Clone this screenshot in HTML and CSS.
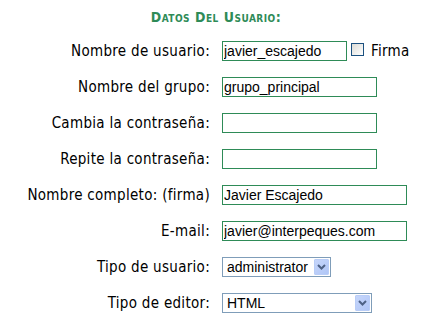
FILE: index.html
```html
<!DOCTYPE html>
<html lang="es">
<head>
    <meta charset="UTF-8">
    <title>Datos del usuario</title>
    <link rel="stylesheet" href="styles.css">
</head>
<body>
    <div id="main">
        <h2 class="title">Datos Del Usuario:</h2>
        <div class="form_grid">
            <label for="user">Nombre de usuario:</label>
            <div class="field_row">
                <input type="text" id="user" class="txt short" value="javier_escajedo">
                <span class="check"></span>
                <span class="check_label">Firma</span>
            </div>

            <label for="group">Nombre del grupo:</label>
            <div class="field_row">
                <input type="text" id="group" class="txt mid" value="grupo_principal">
            </div>

            <label for="pass1">Cambia la contraseña:</label>
            <div class="field_row">
                <input type="password" id="pass1" class="txt mid">
            </div>

            <label for="pass2">Repite la contraseña:</label>
            <div class="field_row">
                <input type="password" id="pass2" class="txt mid">
            </div>

            <label for="fullname">Nombre completo: (firma)</label>
            <div class="field_row">
                <input type="text" id="fullname" class="txt long" value="Javier Escajedo">
            </div>

            <label for="email">E-mail:</label>
            <div class="field_row">
                <input type="text" id="email" class="txt long" value="javier@interpeques.com">
            </div>

            <label for="utype">Tipo de usuario:</label>
            <div class="field_row">
                <div class="select_box sel_user">
                    <select id="utype">
                        <option>administrator</option>
                    </select>
                    <span class="drop_btn">
                        <svg width="9" height="6" viewBox="0 0 9 6"><path d="M1 1 L4.5 4.5 L8 1" fill="none" stroke="#4d6185" stroke-width="2"/></svg>
                    </span>
                </div>
            </div>

            <label for="etype">Tipo de editor:</label>
            <div class="field_row">
                <div class="select_box sel_editor">
                    <select id="etype">
                        <option>HTML</option>
                    </select>
                    <span class="drop_btn">
                        <svg width="9" height="6" viewBox="0 0 9 6"><path d="M1 1 L4.5 4.5 L8 1" fill="none" stroke="#4d6185" stroke-width="2"/></svg>
                    </span>
                </div>
            </div>
        </div>
    </div>
</body>
</html>
```

FILE: styles.css
```css
* {
    margin: 0;
    padding: 0;
    box-sizing: border-box;
}

body {
    background: #ffffff;
    font-family: "DejaVu Sans Condensed", "DejaVu Sans", sans-serif;
    font-size: 15px;
    letter-spacing: 0.3px;
    color: #000000;
}

#main {
    width: 425px;
    padding-top: 8px;
}

.title {
    text-align: center;
    padding-left: 7px;
    font-size: 14px;
    font-weight: bold;
    font-variant: small-caps;
    letter-spacing: 0.5px;
    color: #2e8b57;
    line-height: 18px;
    height: 18px;
}

.form_grid {
    display: grid;
    grid-template-columns: 210px auto;
    column-gap: 12px;
    row-gap: 16px;
    margin-top: 15px;
}

.form_grid > label {
    text-align: right;
    line-height: 20px;
    height: 20px;
    white-space: nowrap;
}

.field_row {
    display: flex;
    align-items: center;
    height: 20px;
}

.txt {
    height: 20px;
    border: 1px solid #2e8b57;
    padding: 0 1px;
    font-family: "Liberation Sans", Arial, sans-serif;
    font-size: 14px;
    letter-spacing: 0;
    color: #000000;
    outline: none;
}

.short {
    width: 125px;
}

.mid {
    width: 155px;
}

.long {
    width: 185px;
}

.check {
    width: 13px;
    height: 13px;
    margin-left: 4px;
    margin-bottom: 3px;
    border: 1px solid #1c5180;
    background: linear-gradient(135deg, #dcdcd7, #ffffff);
}

.check_label {
    margin-left: 7px;
}

.select_box {
    position: relative;
    height: 20px;
}

.select_box select {
    appearance: none;
    -webkit-appearance: none;
    width: 100%;
    height: 20px;
    border: 1px solid #7f9db9;
    background: #ffffff;
    padding: 0 0 0 4px;
    font-family: "Liberation Sans", Arial, sans-serif;
    font-size: 14px;
    color: #000000;
    outline: none;
}

.sel_user {
    width: 109px;
}

.sel_editor {
    width: 150px;
}

.drop_btn {
    position: absolute;
    top: 2px;
    right: 2px;
    width: 15px;
    height: 16px;
    display: flex;
    align-items: center;
    justify-content: center;
    border: 1px solid #b9cdf7;
    border-radius: 1px;
    background: linear-gradient(135deg, #c6d6fb, #b0c6f6);
}
```
